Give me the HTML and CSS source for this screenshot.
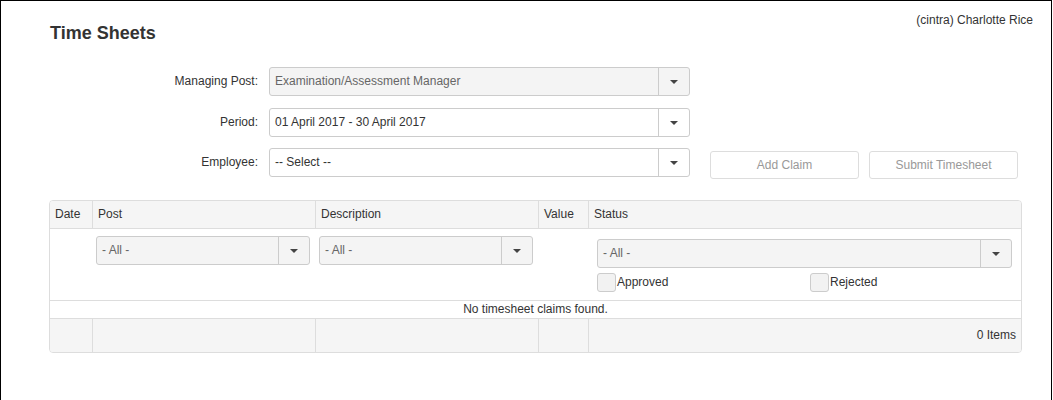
FILE: index.html
```html
<!DOCTYPE html>
<html lang="en">
<head>
    <meta charset="UTF-8">
    <meta name="viewport" content="width=device-width, initial-scale=1.0">
    <title>Time Sheets</title>
    <link rel="stylesheet" href="styles.css">
</head>
<body>
<div class="frame">
    <div class="top-bar">
        <h2 class="page-title">Time Sheets</h2>
        <span class="user-name">(cintra) Charlotte Rice</span>
    </div>

    <div class="filters">
        <div class="form-row">
            <label class="form-label">Managing Post:</label>
            <div class="select disabled">
                <span class="select-text">Examination/Assessment Manager</span>
                <span class="select-arrow"><i class="caret"></i></span>
            </div>
        </div>
        <div class="form-row">
            <label class="form-label">Period:</label>
            <div class="select">
                <span class="select-text">01 April 2017 - 30 April 2017</span>
                <span class="select-arrow"><i class="caret"></i></span>
            </div>
        </div>
        <div class="form-row">
            <label class="form-label">Employee:</label>
            <div class="select">
                <span class="select-text">-- Select --</span>
                <span class="select-arrow"><i class="caret"></i></span>
            </div>
            <div class="actions">
                <button type="button" class="btn" disabled>Add Claim</button>
                <button type="button" class="btn" disabled>Submit Timesheet</button>
            </div>
        </div>
    </div>

    <table class="grid">
        <colgroup>
            <col style="width: 42px">
            <col style="width: 223px">
            <col style="width: 223px">
            <col style="width: 50px">
            <col style="width: 433px">
        </colgroup>
        <thead>
            <tr class="head-row">
                <th>Date</th>
                <th>Post</th>
                <th>Description</th>
                <th>Value</th>
                <th>Status</th>
            </tr>
            <tr class="filter-row">
                <td></td>
                <td>
                    <div class="select small disabled">
                        <span class="select-text">- All -</span>
                        <span class="select-arrow"><i class="caret"></i></span>
                    </div>
                </td>
                <td>
                    <div class="select small disabled">
                        <span class="select-text">- All -</span>
                        <span class="select-arrow"><i class="caret"></i></span>
                    </div>
                </td>
                <td></td>
                <td class="status-filter">
                    <div class="select small disabled">
                        <span class="select-text">- All -</span>
                        <span class="select-arrow"><i class="caret"></i></span>
                    </div>
                    <div class="checks">
                        <label class="check"><span class="check-box"></span>Approved</label>
                        <label class="check"><span class="check-box"></span>Rejected</label>
                    </div>
                </td>
            </tr>
        </thead>
        <tbody>
            <tr class="empty-row">
                <td colspan="5">No timesheet claims found.</td>
            </tr>
        </tbody>
        <tfoot>
            <tr class="foot-row">
                <td></td>
                <td></td>
                <td></td>
                <td></td>
                <td class="item-count">0 Items</td>
            </tr>
        </tfoot>
    </table>
</div>
</body>
</html>
```

FILE: styles.css
```css
/* Base */
body {
    margin: 0;
    font-family: "Liberation Sans", Arial, sans-serif;
    font-size: 12px;
    color: #333;
}
.frame {
    width: 1052px;
    min-height: 420px;
    box-sizing: border-box;
    border: 1px solid #000;
    border-bottom: none;
    padding: 0 0 0 48px;
}

/* Header */
.top-bar {
    display: flex;
    justify-content: space-between;
    align-items: flex-start;
    padding-right: 18px;
}
.page-title {
    margin: 21px 0 0 1px;
    font-size: 18px;
    line-height: 22px;
    font-weight: bold;
    color: #333;
}
.user-name {
    margin-top: 12px;
    line-height: 14px;
}

/* Filter form */
.filters {
    margin-top: 23px;
    display: flex;
    flex-direction: column;
    gap: 11px;
}
.form-row {
    display: flex;
    align-items: flex-start;
}
.form-row:nth-child(2) {
    margin-top: 1px;
}
.form-label {
    width: 209px;
    text-align: right;
    padding-right: 11px;
    line-height: 29px;
}
.select {
    display: flex;
    width: 421px;
    height: 29px;
    box-sizing: border-box;
    border: 1px solid #ccc;
    border-radius: 3px;
    background: #fff;
}
.select.disabled {
    background: #f4f4f4;
    color: #666;
}
.select-text {
    flex: 1;
    padding-left: 5px;
    line-height: 27px;
    white-space: nowrap;
    overflow: hidden;
}
.select-arrow {
    width: 30px;
    border-left: 1px solid #ccc;
    display: flex;
    align-items: center;
    justify-content: center;
}
.caret {
    width: 0;
    height: 0;
    border-top: 4px solid #444;
    border-left: 4px solid transparent;
    border-right: 4px solid transparent;
}
.actions {
    display: flex;
    gap: 10px;
    margin: 3px 0 0 20px;
}
.btn {
    width: 149px;
    height: 28px;
    background: #fff;
    border: 1px solid #ddd;
    border-radius: 3px;
    color: #999;
    font-family: inherit;
    font-size: 12px;
    padding: 0;
}

/* Grid */
.grid {
    margin-top: 21px;
    width: 973px;
    table-layout: fixed;
    border-collapse: separate;
    border-spacing: 0;
    border: 1px solid #ddd;
    border-radius: 4px;
}
.grid th,
.grid td {
    padding: 0;
    font-weight: normal;
    text-align: left;
    vertical-align: top;
}
.head-row th {
    height: 27px;
    line-height: 27px;
    padding-left: 5px;
    background: #f5f5f5;
    border-bottom: 1px solid #ddd;
    border-left: 1px solid #ddd;
}
.head-row th:first-child {
    border-left: none;
    border-top-left-radius: 3px;
}
.head-row th:last-child {
    border-top-right-radius: 3px;
}
.filter-row td {
    height: 61px;
    padding: 7px 5px 0 4px;
    border-bottom: 1px solid #ddd;
}
.filter-row td:first-child {
    padding: 0;
}
.select.small {
    width: 100%;
    height: 29px;
}
.filter-row td.status-filter {
    padding: 10px 9px 0 9px;
}
.checks {
    display: flex;
    margin-top: 5px;
}
.check {
    flex: none;
    width: 213px;
    display: flex;
    align-items: center;
    line-height: 19px;
}
.check + .check {
    width: auto;
}
.check-box {
    width: 19px;
    height: 19px;
    box-sizing: border-box;
    border: 1px solid #ccc;
    border-radius: 3px;
    background: #f2f2f2;
    margin-right: 1px;
}
.empty-row td {
    text-align: center;
    height: 17px;
    line-height: 17px;
    border-bottom: 1px solid #ddd;
}
.foot-row td {
    height: 33px;
    background: #f5f5f5;
    border-left: 1px solid #ddd;
}
.foot-row td:first-child {
    border-left: none;
    border-bottom-left-radius: 3px;
}
.foot-row td.item-count {
    text-align: right;
    padding-right: 5px;
    line-height: 33px;
    border-bottom-right-radius: 3px;
}
```
